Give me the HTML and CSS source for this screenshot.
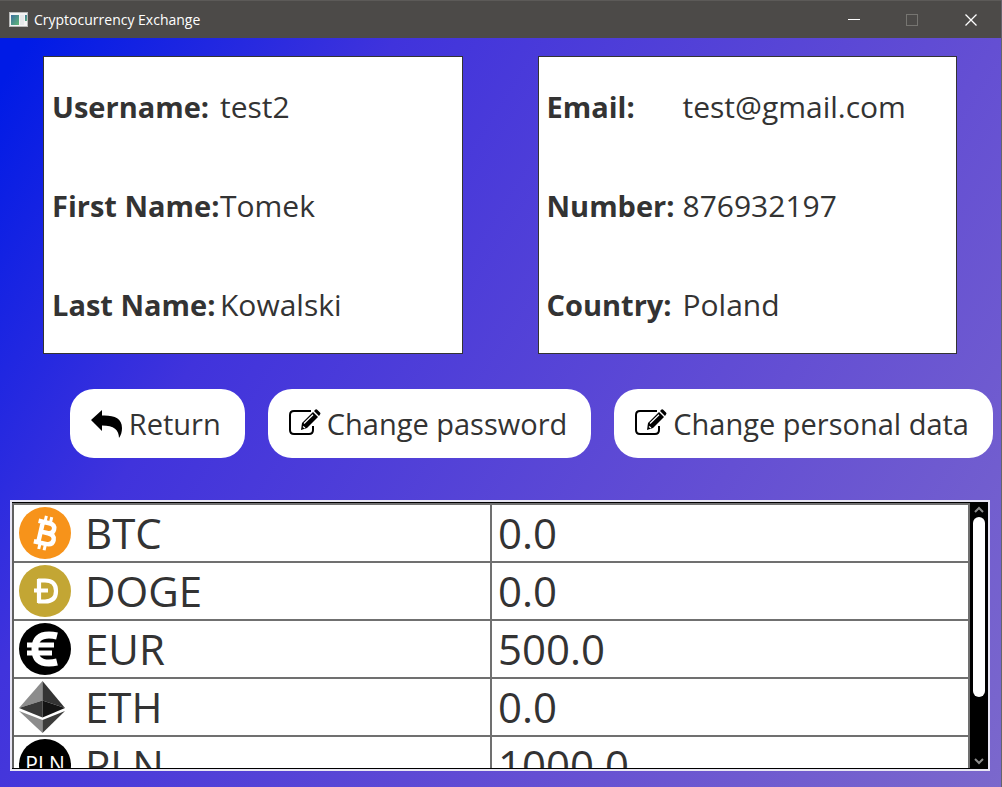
FILE: index.html
```html
<!DOCTYPE html>
<html lang="en">
<head>
<meta charset="utf-8">
<title>Cryptocurrency Exchange</title>
<link rel="stylesheet" href="styles.css">
</head>
<body>
<div class="window">
  <header class="titlebar">
    <svg class="app-icon" width="19" height="16" viewBox="0 0 19 16" aria-hidden="true">
      <defs><linearGradient id="pane" x1="0" y1="0" x2="1" y2="1"><stop offset="0" stop-color="#3c6fa0"/><stop offset="1" stop-color="#5fb876"/></linearGradient></defs>
      <rect width="19" height="15" fill="#b9b9b9"/><rect x="1" y="1" width="17" height="13" fill="#f4f4f4"/>
      <rect x="2" y="3" width="8" height="10" fill="url(#pane)"/><rect x="11" y="3" width="4" height="10" fill="#e6e8ea"/><rect x="16" y="3" width="2" height="6" fill="url(#pane)"/>
    </svg>
    <h1 class="title">Cryptocurrency Exchange</h1>
    <div class="controls">
      <button class="control" aria-label="Minimize"><svg width="12" height="12"><path d="M0 5.500H12" stroke="#fff"/></svg></button>
      <button class="control" aria-label="Maximize" disabled><svg width="12" height="12"><rect x=".5" y=".5" width="11" height="11" fill="none" stroke="#767571"/></svg></button>
      <button class="control" aria-label="Close"><svg width="12" height="12"><path d="M.5.5l11 11M11.500.5l-11 11" stroke="#fff" stroke-width="1.300"/></svg></button>
    </div>
  </header>
  <main class="content">
    <section class="cards">
      <dl class="card">
        <dt>Username:</dt><dd>test2</dd>
        <dt>First Name:</dt><dd>Tomek</dd>
        <dt>Last Name:</dt><dd>Kowalski</dd>
      </dl>
      <dl class="card card-contact">
        <dt>Email:</dt><dd>test@gmail.com</dd>
        <dt>Number:</dt><dd>876932197</dd>
        <dt>Country:</dt><dd>Poland</dd>
      </dl>
    </section>
    <nav class="actions">
      <button class="action">
        <svg width="32" height="32" viewBox="0 0 32 32" aria-hidden="true"><path d="M0 12L11 2V7.500C23 7 31 10 31 20C31 24 30 27 28 30C28 22 23 17.500 11 17.500V23Z"/></svg>Return</button>
      <button class="action">
        <svg width="32" height="32" viewBox="0 0 32 32" aria-hidden="true"><use href="#edit"/></svg>Change password</button>
      <button class="action">
        <svg width="32" height="32" viewBox="0 0 32 32" aria-hidden="true"><g id="edit"><path d="M22 3H5Q1 3 1 7V22Q1 26 5 26H20Q24 26 24 22V18" fill="none" stroke="#000" stroke-width="2"/><path d="M12 22L13 15L24 4L29 9L18 20Z"/><path d="M25 3L26.500 1.500Q27.500 1 28.500 2L31 4.500Q32 5.500 31 6.500L30 8Z"/><path d="M15 15.500L24 6.800M14 18.500L16 20" stroke="#fff" stroke-width="1.200"/></g></svg>Change personal data</button>
    </nav>
    <section class="wallet">
      <div class="rows">
        <table class="balances">
          <tbody>
            <tr><td><div class="coin"><svg width="52" height="52" viewBox="0 0 52 52" aria-hidden="true"><circle cx="26" cy="26" r="26" fill="#f7931a"/><g transform="rotate(13 26 26)" fill="none" stroke="#fff"><path d="M17 15.500H28Q34 15.500 34 20.500T28 25.500H22H29Q36 25.500 36 31T29 36.500H17M21.500 15.500V36.500" stroke-width="4.500"/><path d="M23.500 9V15M29 9V15M23.500 37V43M29 37V43" stroke-width="3"/></g></svg>BTC</div></td><td>0.0</td></tr>
            <tr><td><div class="coin"><svg width="52" height="52" viewBox="0 0 52 52" aria-hidden="true"><circle cx="26" cy="26" r="26" fill="#c3a634"/><path d="M19 15.500H26Q37 15.500 37 26T26 36.500H19M20 14V38M15 25.500H29" fill="none" stroke="#fff" stroke-width="4.200"/></svg>DOGE</div></td><td>0.0</td></tr>
            <tr><td><div class="coin"><svg width="52" height="52" viewBox="0 0 52 52" aria-hidden="true"><circle cx="26" cy="26" r="26"/><path d="M38 13Q34 12 30 12C20 12 16 17 16 26C16 35 20 40 30 40Q34 40 38 39" fill="none" stroke="#fff" stroke-width="7"/><path d="M8 22H35M8 30H33" stroke="#fff" stroke-width="5"/></svg>EUR</div></td><td>500.0</td></tr>
            <tr><td><div class="coin"><svg width="52" height="52" viewBox="0 0 52 52" aria-hidden="true"><path d="M23.500 0L0 27L23.500 19.500Z" fill="#8c8c8c"/><path d="M23.500 0L46 27L23.500 19.500Z" fill="#343434"/><path d="M0 27L23.500 19.500V36.500Z" fill="#393939"/><path d="M46 27L23.500 19.500V36.500Z" fill="#141414"/><path d="M0 30L23.500 39V52Z" fill="#8c8c8c"/><path d="M46 30L23.500 39V52Z" fill="#3c3c3b"/></svg>ETH</div></td><td>0.0</td></tr>
            <tr><td><div class="coin"><svg width="52" height="52" viewBox="0 0 52 52" aria-hidden="true"><circle cx="26" cy="26" r="26"/><text class="coin-text" x="26" y="33" text-anchor="middle">PLN</text></svg>PLN</div></td><td>1000.0</td></tr>
          </tbody>
        </table>
      </div>
      <div class="scrollbar" aria-hidden="true">
        <svg width="10" height="8"><path d="M1 6L5 2L9 6" fill="none" stroke="#8c8c8c" stroke-width="2"/></svg>
        <div class="track"><div class="thumb"></div></div>
        <svg width="10" height="8"><path d="M1 2L5 6L9 2" fill="none" stroke="#8c8c8c" stroke-width="2"/></svg>
      </div>
    </section>
  </main>
</div>
</body>
</html>
```
FILE: styles.css
```css
* { box-sizing: border-box; }
body {
  margin: 0;
  font-family: "Open Sans", "Noto Sans", sans-serif;
  color: #333;
}
.window {
  display: flex;
  flex-direction: column;
  min-height: 100vh;
  border-right: 1px solid #66646c;
}
.titlebar {
  display: flex;
  align-items: center;
  height: 38px;
  padding-left: 9px;
  background: #4c4a48;
  border-top: 1px solid #5c5a58;
  color: #fff;
}
.title {
  margin: 0 0 0 6px;
  font-size: 14px;
  line-height: 20px;
  font-weight: 400;
}
.controls { display: flex; margin-left: auto; }
.control {
  display: flex;
  align-items: center;
  justify-content: center;
  width: 58px;
  height: 36px;
  padding: 0;
  border: 0;
  background: none;
}
.content {
  flex: 1;
  padding: 18px 11px 16px 10px;
  background: linear-gradient(122deg, #001be6 2%, #4033dc 27%, #644fd3 68%, #7b68cc 100%);
}
.control:last-child { width: 60px; }
.cards {
  display: grid;
  grid-template-columns: 1fr 1fr;
  gap: 75px;
  padding: 0 33px;
}
.card {
  display: grid;
  grid-template-columns: 168px 1fr;
  grid-auto-rows: 99px;
  align-items: center;
  height: 298px;
  margin: 0;
  padding: 0 8px;
  background: #fff;
  border: 1px solid #333;
  font-size: 30px;
  line-height: 40px;
  white-space: nowrap;
}
.card-contact { grid-template-columns: 136px 1fr; }
.card dt { font-weight: 700; font-size: 29px; }
.card dd { margin: 0; }
.actions {
  display: flex;
  justify-content: flex-end;
  gap: 23px;
  margin: 35px -3px 42px 0;
}
.action {
  display: flex;
  align-items: center;
  gap: 6px;
  height: 69px;
  padding: 0 24px 0 21px;
  border: 0;
  border-radius: 24px;
  background: #fff;
  color: #333;
  font: 400 29px/40px "Open Sans", "Noto Sans", sans-serif;
  white-space: nowrap;
}
.wallet {
  display: flex;
  height: 271px;
  padding: 1px 1px 1px 0;
  border: 2px solid #e8e6f4;
  background: #000;
}
.rows {
  flex: 1;
  overflow: hidden;
  background: #fff;
}
.balances {
  width: 100%;
  table-layout: fixed;
  border-spacing: 0;
  border-top: 2px solid #707070;
  border-left: 2px solid #606060;
}
.balances td {
  height: 58px;
  padding: 0 6px;
  border-right: 2px solid #707070;
  border-bottom: 2px solid #707070;
  font-size: 42px;
  line-height: 56px;
}
.balances td:first-child { padding: 0 5px; }
.coin {
  display: flex;
  align-items: center;
  gap: 14px;
}
.coin-text { fill: #fff; font-size: 21px; }
.scrollbar {
  display: flex;
  flex-direction: column;
  align-items: center;
  width: 17px;
  padding: 3px 0;
  background: #000;
}
.track { flex: 1; width: 12px; margin: 3px 0; }
.thumb {
  height: 76%;
  border-radius: 6px;
  background: #fff;
}
```
